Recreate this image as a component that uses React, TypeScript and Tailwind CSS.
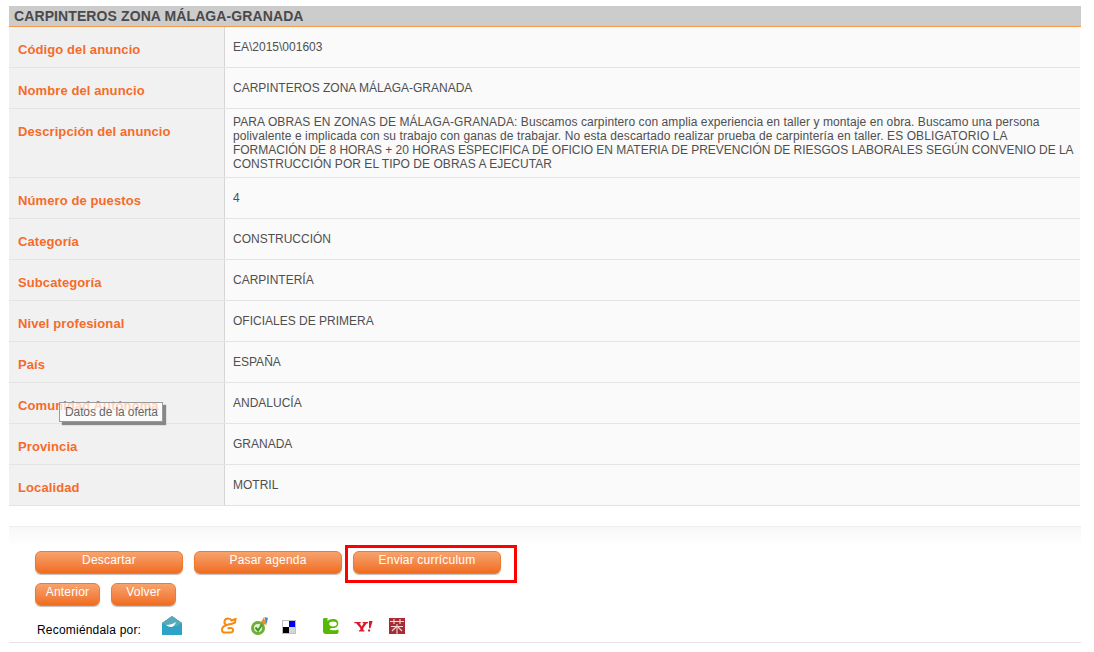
import React from 'react'

const rows: { label: string; value: string; tall?: boolean }[] = [
  { label: 'Código del anuncio', value: 'EA\\2015\\001603' },
  { label: 'Nombre del anuncio', value: 'CARPINTEROS ZONA MÁLAGA-GRANADA' },
  { label: 'Descripción del anuncio', value: '', tall: true },
  { label: 'Número de puestos', value: '4' },
  { label: 'Categoría', value: 'CONSTRUCCIÓN' },
  { label: 'Subcategoría', value: 'CARPINTERÍA' },
  { label: 'Nivel profesional', value: 'OFICIALES DE PRIMERA' },
  { label: 'País', value: 'ESPAÑA' },
  { label: 'Comunidad Autónoma', value: 'ANDALUCÍA' },
  { label: 'Provincia', value: 'GRANADA' },
  { label: 'Localidad', value: 'MOTRIL' },
]

function Description() {
  return (
    <>
      <div className="whitespace-nowrap tracking-[0.085px]">
        PARA OBRAS EN ZONAS DE MÁLAGA-GRANADA: Buscamos carpintero con amplia experiencia en taller y montaje en obra. Buscamo una persona
      </div>
      <div className="whitespace-nowrap tracking-[0.1px]">
        polivalente e implicada con su trabajo con ganas de trabajar. No esta descartado realizar prueba de carpintería en taller. ES OBLIGATORIO LA
      </div>
      <div className="whitespace-nowrap tracking-[-0.02px]">
        FORMACIÓN DE 8 HORAS + 20 HORAS ESPECIFICA DE OFICIO EN MATERIA DE PREVENCIÓN DE RIESGOS LABORALES SEGÚN CONVENIO DE LA
      </div>
      <div className="whitespace-nowrap tracking-[0.04px]">CONSTRUCCIÓN POR EL TIPO DE OBRAS A EJECUTAR</div>
    </>
  )
}

function OrangeButton({ text, width }: { text: string; width: string }) {
  return (
    <button
      className={`${width} h-[23px] rounded-[6px] border border-[#ee7a30] bg-gradient-to-b from-[#f6a36c] to-[#f06c1c] pb-[4px] text-center text-[12px] leading-[15px] tracking-[0.2px] text-white shadow-[0_1px_1px_rgba(0,0,0,0.25)]`}
    >
      {text}
    </button>
  )
}

function MailIcon() {
  return (
    <svg width="20" height="19" viewBox="0 0 20 19" className="block">
      <path d="M0 7 10 0l10 7v12H0z" fill="#2fa3c6" />
      <path d="M0 7 10 0l10 7-5 3H5z" fill="#5aa8b8" />
      <path d="M4 9c4 0 7-1 10-3-1 3-3 5-5 5-2 0-3-1-5-2z" fill="#fff" />
    </svg>
  )
}

function OrangeDogIcon() {
  return (
    <svg width="17" height="17" viewBox="0 0 17 17" fill="none" stroke="#f98a10" strokeWidth="2" className="block">
      <path d="M6 7.500C3.500 6.500 4 1.500 8 1.500c2 0 3 .8 3.500 2L15.500 2 15 5.500l-3 1.200C9.500 7.500 6 7.500 3.500 9.500c-2.500 2.500-2 6 1.500 6h6" />
      <path d="M7.500 11.500c2-.8 5-.8 5.500 1 .3 1.500-.5 3-2 3" />
    </svg>
  )
}

function GreenCheckIcon() {
  return (
    <svg width="17" height="18" viewBox="0 0 17 18" className="block">
      <path d="M9.500 6 13 0l1 4 1-2 .5 6z" fill="#f58a2c" />
      <path d="M13.500 0 17 1l-1.500 6z" fill="#3f87d8" />
      <circle cx="7" cy="11" r="7" fill="#6fb03a" />
      <circle cx="7" cy="11" r="4" fill="#e6f2d4" />
      <path d="M4.500 10.500 7 13.500l4-6" fill="none" stroke="#3f9b25" strokeWidth="2" />
    </svg>
  )
}

function DeliciousIcon() {
  return (
    <svg width="14" height="14" viewBox="0 0 14 14" className="block">
      <rect width="14" height="14" fill="#fff" />
      <rect x="7" width="7" height="7" fill="#0000f0" />
      <rect y="7" width="7" height="7" fill="#000" />
      <rect x="7" y="7" width="7" height="7" fill="#d6d6d6" />
      <rect x=".5" y=".5" width="13" height="13" fill="none" stroke="#c0c0c0" />
    </svg>
  )
}

function TechnoratiIcon() {
  return (
    <svg width="16" height="16" viewBox="0 0 16 16" className="block">
      <path d="M1.500 0h3v3c2-2 8-3 10 0 2 3 0 7-4 7-2 0-3 0-4 1l1 1c2 .5 5 .5 8-.5v2.500c0 1-1 2-2 2H3c-2 0-3-1-3-3V1.500C0 .7.700 0 1.500 0z" fill="#56b800" />
      <ellipse cx="10" cy="6" rx="3.800" ry="2.400" fill="#fff" />
    </svg>
  )
}

function YahooIcon() {
  return (
    <svg width="19" height="11" viewBox="0 0 20 12" className="block">
      <path d="M0 1h7v1.500H5.600L8 6l2.400-3.500H9V1h6v1.500h-1.400L9.800 7.500V10H11v1.500H5V10h1.500V7.500L2 2.500H0z" fill="#e0162b" />
      <path d="M16 0h4l-2.500 8h-1.500zM15 9.200h2.200v2.300H15z" fill="#e0162b" />
    </svg>
  )
}

function RedStampIcon() {
  return (
    <svg width="16" height="16" viewBox="0 0 16 16" className="block">
      <rect width="16" height="16" fill="#a62b33" />
      <path d="M1 3.500h14M5 1v5M11 1v5M2 8.500h12M8 6v10M3 13l4-4M13 13 9 9" stroke="#f1d9da" strokeWidth="1.100" fill="none" />
    </svg>
  )
}

export default function App() {
  return (
    <div className="relative h-[652px] w-[1094px] overflow-hidden bg-white pl-[9px] pt-[6px] font-['Liberation_Sans',Arial,sans-serif]">
      <div className="w-[1072px]">
        <div className="h-[21px] border-b border-[#f59a4a] bg-[#cccccc] pl-[5px] text-[14px] font-bold leading-[20px] tracking-[0.1px] text-[#4a4a4a]">
          CARPINTEROS ZONA MÁLAGA-GRANADA
        </div>

        {/* filas */}
        <div className="w-[1071px]">
          {rows.map((row) => (
            <div
              key={row.label}
              className={`flex border-b border-[#e4e4e4] ${row.tall ? 'h-[69px]' : 'h-[41px]'}`}
            >
              <div className="w-[216px] shrink-0 border-r border-[#d6d6d6] bg-[#f1f1f1] pl-[9px] pt-[14px] text-[13px] font-bold leading-[17px] tracking-[0.1px] text-[#f56b2a]">
                {row.label}
              </div>
              <div
                className={`flex-1 bg-[#fafafa] pl-[8px] text-[12px] leading-[14px] text-[#4f4f4f] ${
                  row.tall ? 'pt-[6px]' : 'pt-[13px]'
                }`}
              >
                {row.tall ? <Description /> : row.value}
              </div>
            </div>
          ))}
        </div>

        <div className="mt-[20px] h-[20px] border-t border-[#eeeeee] bg-gradient-to-b from-[#f7f7f7] to-white" />

        <div className="flex gap-[11px] pl-[26px] pt-[5px]">
          <OrangeButton text="Descartar" width="w-[148px]" />
          <OrangeButton text="Pasar agenda" width="w-[148px]" />
          <OrangeButton text="Enviar currículum" width="w-[148px]" />
        </div>
        <div className="mt-[9px] flex gap-[11px] pl-[26px]">
          <OrangeButton text="Anterior" width="w-[65px]" />
          <OrangeButton text="Volver" width="w-[65px]" />
        </div>

        <div className="mt-[10px] flex h-[27px] items-start border-b border-[#e4e4e4] pl-[28px]">
          <span className="mt-[7px] w-[125px] text-[12px] leading-[14px] tracking-[0.2px] text-black">Recomiéndala por:</span>
          <span className="w-[58px]"><MailIcon /></span>
          <span className="mt-[1px] w-[31px]"><OrangeDogIcon /></span>
          <span className="mt-[1px] w-[31px]"><GreenCheckIcon /></span>
          <span className="mt-[4px] w-[41px]"><DeliciousIcon /></span>
          <span className="mt-[2px] w-[31px]"><TechnoratiIcon /></span>
          <span className="mt-[5px] w-[35px]"><YahooIcon /></span>
          <span className="mt-[2px]"><RedStampIcon /></span>
        </div>
      </div>

      {/* tooltip */}
      <div className="absolute left-[59px] top-[402px] h-[20px] w-[104px] border border-[#9a9a9a] bg-white/70 pl-[5px] text-[12px] leading-[18px] tracking-[-0.1px] text-[#666666] shadow-[3px_3px_1px_rgba(110,110,110,0.8)]">
        Datos de la oferta
      </div>

      {/* marco rojo */}
      <div className="absolute left-[345px] top-[545px] h-[38px] w-[172px] border-[3px] border-[#ff0000]" />
    </div>
  )
}
